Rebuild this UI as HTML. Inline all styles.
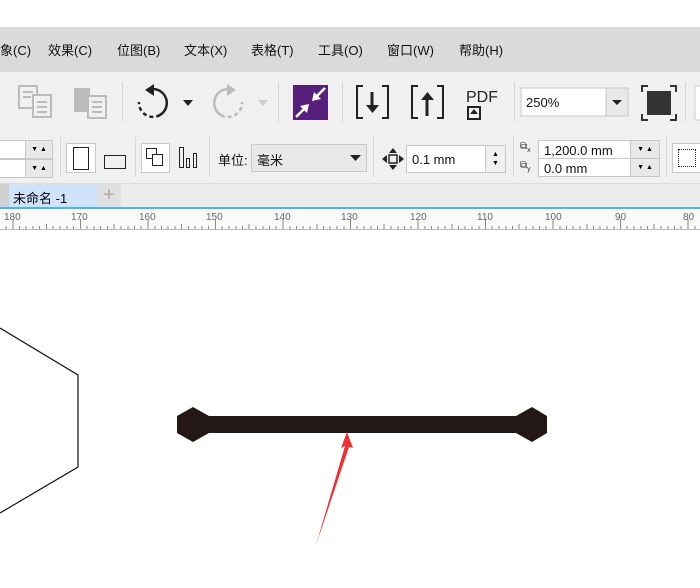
<!DOCTYPE html>
<html><head><meta charset="utf-8"><style>
body{margin:0;width:700px;height:588px;overflow:hidden;background:#fff;position:relative;font-family:"Liberation Sans","Noto Sans CJK SC",sans-serif}
.a{position:absolute}
.menu{top:27px;left:0;width:700px;height:45px;background:#dadada}
.menu span{position:absolute;top:13px;font-size:13px;color:#111}
.tb{top:72px;left:0;width:700px;height:59px;background:#f0f0f0;border-bottom:1px solid #e0e0e0}
.pb{top:131px;left:0;width:700px;height:52px;background:#f0f0f0;border-bottom:1px solid #dcdcdc}
.sep{position:absolute;width:1px;background:#d6d6d6}
.box{position:absolute;background:#fff;border:1px solid #c8c8c8;box-sizing:border-box;font-size:13px;color:#111}
.spin{position:absolute;background:#e8e8e8;border:1px solid #c8c8c8;box-sizing:border-box;font-size:7px;line-height:9px;text-align:center}
</style></head><body>
<div class="a menu">
<span style="left:0">象(C)</span><span style="left:48px">效果(C)</span><span style="left:117px">位图(B)</span><span style="left:184px">文本(X)</span><span style="left:251px">表格(T)</span><span style="left:318px">工具(O)</span><span style="left:387px">窗口(W)</span><span style="left:459px">帮助(H)</span>
</div>
<div class="a tb">
<svg class="a" style="left:0;top:0" width="700" height="59">
<g fill="none" stroke="#bbb" stroke-width="2"><rect x="19" y="14" width="18" height="22"/><rect x="33" y="23" width="18" height="22" fill="#f0f0f0"/><path d="M23 20h10M23 25h8M37 30h10M37 35h10M37 40h10"/></g>
<rect x="74" y="16" width="16" height="24" fill="#bbb"/><rect x="88" y="24" width="18" height="22" fill="#f0f0f0" stroke="#bbb" stroke-width="2"/><path d="M92 30h10M92 35h10M92 40h10" stroke="#bbb" stroke-width="2"/>
<path d="M153 17 A14 14 0 0 1 160 43" fill="none" stroke="#222" stroke-width="2.5"/>
<path d="M160 43 A14 14 0 0 1 139 30" fill="none" stroke="#222" stroke-width="2.5" stroke-dasharray="4 3"/>
<path d="M145 18l9-6v12z" fill="#222"/>
<path d="M183 28h10l-5 6z" fill="#222"/>
<path d="M228 17 A14 14 0 0 0 221 43" fill="none" stroke="#bbb" stroke-width="2.5"/>
<path d="M221 43 A14 14 0 0 0 242 30" fill="none" stroke="#bbb" stroke-width="2.5" stroke-dasharray="4 3"/>
<path d="M236 18l-9-6v12z" fill="#bbb"/>
<path d="M258 28h10l-5 6z" fill="#ccc"/>
<rect x="293" y="13" width="35" height="35" fill="#561f7a"/>
<path d="M296 45l10-10M325 16l-10 10" stroke="#fff" stroke-width="2.5"/>
<path d="M309 32l-9 2l7 7z M312 29l9-2l-7-7z" fill="#fff"/>
<g fill="none" stroke="#222" stroke-width="2"><path d="M363 14h-6v32h6M382 14h6v32h-6"/><path d="M418 14h-6v32h6M437 14h6v32h-6"/></g>
<path d="M372 20v16" stroke="#222" stroke-width="3"/><path d="M366 33h13l-6.5 8z" fill="#222"/>
<path d="M427 26v18" stroke="#222" stroke-width="3"/><path d="M421 28h13l-6.5-8z" fill="#222"/>
<text x="466" y="30" font-size="16" font-family="Liberation Sans" fill="#222">PDF</text>
<rect x="468" y="35" width="12" height="12" fill="none" stroke="#222" stroke-width="2"/><path d="M474 37l-4 5h8z" fill="#222"/>
<rect x="521" y="16" width="107" height="28" fill="#fff" stroke="#c8c8c8"/><rect x="606" y="16" width="22" height="28" fill="#e8e8e8" stroke="#c8c8c8"/><path d="M612 28h10l-5 5z" fill="#222"/>
<text x="526" y="35" font-size="13" font-family="Liberation Sans" fill="#111">250%</text>
<rect x="647" y="19" width="24" height="24" fill="#333"/><g fill="none" stroke="#333" stroke-width="2"><path d="M642 20v-6h6M670 14h6v6M676 42v6h-6M648 48h-6v-6"/></g>
<rect x="695" y="14" width="10" height="34" fill="#fff" stroke="#ccc"/>
</svg>
<div class="sep" style="left:122px;top:10px;height:40px"></div><div class="sep" style="left:278px;top:10px;height:40px"></div><div class="sep" style="left:342px;top:10px;height:40px"></div><div class="sep" style="left:514px;top:10px;height:40px"></div><div class="sep" style="left:685px;top:10px;height:40px"></div>
</div>
<div class="a pb">
<div class="box" style="left:-1px;top:9px;width:27px;height:19px"></div><div class="box" style="left:-1px;top:28px;width:27px;height:19px"></div>
<div class="spin" style="left:25px;top:9px;width:28px;height:19px;padding-top:4px">▼ ▲</div><div class="spin" style="left:25px;top:28px;width:28px;height:19px;padding-top:4px">▼ ▲</div>
<div class="sep" style="left:60px;top:6px;height:40px"></div>
<div class="box" style="left:66px;top:12px;width:30px;height:30px"></div>
<div class="a" style="left:73px;top:16px;width:14px;height:21px;border:1.5px solid #222"></div>
<div class="a" style="left:104px;top:24px;width:20px;height:12px;border:1.5px solid #222"></div>
<div class="sep" style="left:135px;top:6px;height:40px"></div>
<div class="box" style="left:141px;top:12px;width:29px;height:30px"></div>
<div class="a" style="left:146px;top:17px;width:9px;height:9px;border:1.5px solid #222"></div><div class="a" style="left:152px;top:23px;width:9px;height:10px;border:1.5px solid #222;background:#fff"></div>
<div class="a" style="left:179px;top:16px;width:3px;height:19px;border:1.5px solid #222"></div><div class="a" style="left:186px;top:27px;width:2px;height:8px;border:1.5px solid #222"></div><div class="a" style="left:193px;top:22px;width:2px;height:13px;border:1.5px solid #222"></div>
<div class="sep" style="left:209px;top:6px;height:40px"></div>
<div class="a" style="left:218px;top:19px;font-size:13px;color:#111">单位:</div>
<div class="box" style="left:251px;top:13px;width:116px;height:28px;background:#e8e8e8;padding:5px 0 0 5px">毫米</div>
<svg class="a" style="left:350px;top:24px" width="12" height="8"><path d="M0 0h11l-5.5 6z" fill="#222"/></svg>
<div class="sep" style="left:373px;top:6px;height:40px"></div>
<svg class="a" style="left:382px;top:17px" width="22" height="22"><path d="M11 0l4 5h-8zM11 22l4-5h-8zM0 11l5 4v-8zM22 11l-5 4v-8z" fill="#222"/><rect x="7" y="7" width="8" height="8" fill="none" stroke="#222" stroke-width="1.5"/></svg>
<div class="box" style="left:406px;top:14px;width:80px;height:28px;padding:6px 0 0 5px">0.1 mm</div>
<div class="spin" style="left:485px;top:14px;width:21px;height:28px;background:#f0f0f0;padding-top:4px">▲<br>▼</div>
<div class="sep" style="left:513px;top:6px;height:40px"></div>
<div class="a" style="left:520px;top:10px;font-size:10px;color:#333">⧉<sub style="font-size:7px">x</sub></div><div class="a" style="left:520px;top:29px;font-size:10px;color:#333">⧉<sub style="font-size:7px">y</sub></div>
<div class="box" style="left:538px;top:9px;width:93px;height:19px;padding:2px 0 0 5px">1,200.0 mm</div>
<div class="box" style="left:538px;top:27px;width:93px;height:19px;padding:2px 0 0 5px">0.0 mm</div>
<div class="spin" style="left:630px;top:9px;width:30px;height:19px;padding-top:4px">▼ ▲</div><div class="spin" style="left:630px;top:27px;width:30px;height:19px;padding-top:4px">▼ ▲</div>
<div class="sep" style="left:666px;top:6px;height:40px"></div>
<div class="box" style="left:672px;top:12px;width:30px;height:30px"></div>
<div class="a" style="left:678px;top:18px;width:16px;height:16px;border:1.5px dotted #222"></div>
</div>
<div class="a" style="top:184px;left:0;width:700px;height:23px;background:#ececec"></div>
<div class="a" style="top:184px;left:0;width:9px;height:23px;background:#d0d0d0"></div>
<div class="a" style="top:184px;left:9px;width:88px;height:23px;background:#cfe3fb;font-size:13px;padding:4px 0 0 4px;box-sizing:border-box">未命名 -1</div>
<div class="a" style="top:184px;left:97px;width:24px;height:23px;background:#e0e0e0;color:#aaa;font-size:20px;text-align:center;line-height:23px">+</div>
<div class="a" style="top:207px;left:0;width:700px;height:2px;background:#4ab3f0"></div>
<svg class="a" style="left:0;top:209px" width="700" height="22">
<rect width="700" height="21" fill="#fafafa"/><rect y="20" width="700" height="1" fill="#bbb"/>
<g font-size="10" fill="#666" font-family="Liberation Sans">
<text x="4" y="11">180</text><text x="71" y="11">170</text><text x="139" y="11">160</text><text x="206" y="11">150</text><text x="274" y="11">140</text><text x="341" y="11">130</text><text x="410" y="11">120</text><text x="477" y="11">110</text><text x="545" y="11">100</text><text x="615" y="11">90</text><text x="683" y="11">80</text></g>
<g stroke="#888" stroke-width="1">
<path d="M13 10v10M80.5 10v10M148 10v10M215.5 10v10M283 10v10M350.5 10v10M418 10v10M485.5 10v10M553 10v10M620.5 10v10M688 10v10"/>
<path d="M6 17v3M19.5 17v3M26 17v3M33 17v3M39.5 17v3M46.5 15v5M53 17v3M60 17v3M67 17v3M73.5 17v3M87 17v3M94 17v3M100.5 17v3M107.5 17v3M114 15v5M121 17v3M128 17v3M134.5 17v3M141 17v3M155 17v3M161.5 17v3M168 17v3M175 17v3M181.5 15v5M188.5 17v3M195 17v3M202 17v3M208.5 17v3M222 17v3M229 17v3M236 17v3M242.5 17v3M249 15v5M256 17v3M263 17v3M269.5 17v3M276 17v3M290 17v3M296.5 17v3M303 17v3M310 17v3M317 15v5M323.5 17v3M330 17v3M337 17v3M344 17v3M357 17v3M364 17v3M371 17v3M377.5 17v3M384 15v5M391 17v3M398 17v3M404.5 17v3M411 17v3M425 17v3M431.5 17v3M438 17v3M445 17v3M452 15v5M458.5 17v3M465 17v3M472 17v3M479 17v3M492 17v3M499 17v3M506 17v3M512.5 17v3M519 15v5M526 17v3M533 17v3M539.5 17v3M546 17v3M560 17v3M566.5 17v3M573 17v3M580 17v3M587 15v5M593.5 17v3M600 17v3M607 17v3M614 17v3M627 17v3M634 17v3M641 17v3M647.5 17v3M654 15v5M661 17v3M668 17v3M674.5 17v3M681 17v3M695 17v3"/></g>
</svg>
<svg class="a" style="left:0;top:231px" width="700" height="357">
<path d="M0 97L78 144V236L0 282" fill="none" stroke="#111" stroke-width="1.2"/>
<rect x="200" y="185" width="330" height="17" fill="#231815"/>
<path d="M193 176L209 185V202L193 211L177 202V185Z" fill="#231815"/>
<path d="M532 176L547 185V202L532 211L516 202V185Z" fill="#231815"/>
<path d="M347 201L353 217L349 216L316 314L345 215L341 217Z" fill="#f03030"/>
</svg>
</body></html>
